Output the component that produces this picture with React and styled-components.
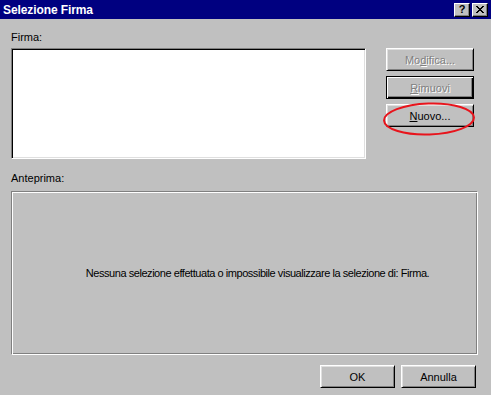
import React from "react";
import styled, { createGlobalStyle } from "styled-components";

const GlobalStyle = createGlobalStyle`
  html, body {
    margin: 0;
    padding: 0;
    background: #c0c0c0;
  }
  body {
    font-family: "Liberation Sans", Arial, sans-serif;
    font-size: 11px;
    color: #000;
  }
`;

const App = () => {
    return (
        <>
            <GlobalStyle />
            <Dialog>
                <TitleBar>
                    <Title>Selezione Firma</Title>
                    <TitleButtons>
                        <CaptionButton>?</CaptionButton>
                        <CaptionButton $gap>
                            <svg width="8" height="7" viewBox="0 0 8 7">
                                <path d="M0 0h2v1h1v1h2V1h1V0h2v1H7v1H6v1H5v1h1v1h1v1h1v1H6V6H5V5H3v1H2v1H0V6h1V5h1V4h1V3H2V2H1V1H0z" fill="#000" />
                            </svg>
                        </CaptionButton>
                    </TitleButtons>
                </TitleBar>

                <Body>
                    <Top>
                        <ListCol>
                            <Label>Firma:</Label>
                            <ListBox />
                        </ListCol>
                        <SideButtons>
                            <Button disabled $wide>Mo<u>d</u>ifica...</Button>
                            <Button disabled $wide $default><u>R</u>imuovi</Button>
                            <Marked>
                                <Button $wide><u>N</u>uovo...</Button>
                                <Circle width="96" height="40" viewBox="0 0 96 40">
                                    <ellipse cx="47" cy="19" rx="45" ry="15.5" transform="rotate(-2 47 19)" fill="none" stroke="#e8141c" strokeWidth="2" />
                                </Circle>
                            </Marked>
                        </SideButtons>
                    </Top>

                    <Label>Anteprima:</Label>
                    <Preview>
                        <PreviewText>Nessuna selezione effettuata o impossibile visualizzare la selezione di: Firma.</PreviewText>
                    </Preview>

                    <Footer>
                        <Button>OK</Button>
                        <Button>Annulla</Button>
                    </Footer>
                </Body>
            </Dialog>
        </>
    )
};

export default App;

const Dialog = styled.div`
  width: 491px;
  height: 395px;
  background: #c0c0c0;
  display: flex;
  flex-direction: column;
`;

const TitleBar = styled.div`
  height: 19px;
  background: #000080;
  display: flex;
  align-items: center;
  justify-content: space-between;
  padding: 0 3px 0 3px;
`;

const Title = styled.div`
  color: #fff;
  font-weight: bold;
  font-size: 12px;
  letter-spacing: -0.1px;
`;

const TitleButtons = styled.div`
  display: flex;
  align-items: center;
`;

const CaptionButton = styled.div`
  width: 16px;
  height: 14px;
  box-sizing: border-box;
  margin-left: ${p => (p.$gap ? "2px" : "0")};
  background: #c0c0c0;
  border: 1px solid;
  border-color: #fff #000 #000 #fff;
  box-shadow: inset -1px -1px #808080;
  display: flex;
  align-items: center;
  justify-content: center;
  font-weight: bold;
  font-size: 11px;
  line-height: 1;
`;

const Body = styled.div`
  flex: 1;
  display: flex;
  flex-direction: column;
  padding: 12px 14px 0 11px;
`;

const Top = styled.div`
  display: flex;
  gap: 20px;
`;

const ListCol = styled.div`
  display: flex;
  flex-direction: column;
`;

const Label = styled.div`
  line-height: 13px;
  height: 13px;
  margin-bottom: 4px;
`;

const ListBox = styled.div`
  width: 355px;
  height: 111px;
  box-sizing: border-box;
  background: #fff;
  border: 1px solid;
  border-color: #808080 #fff #fff #808080;
  box-shadow: inset 1px 1px #000, inset -1px -1px #dfdfdf;
  margin-bottom: 13px;
`;

const SideButtons = styled.div`
  display: flex;
  flex-direction: column;
  gap: 5px;
  padding-top: 17px;
`;

const Button = styled.button`
  width: ${p => (p.$wide ? "88px" : "75px")};
  height: 23px;
  box-sizing: border-box;
  padding: 0;
  background: #c0c0c0;
  font-family: "Liberation Sans", Arial, sans-serif;
  font-size: 11px;
  color: #000;
  border: 1px solid;
  border-color: ${p => (p.$default ? "#000" : "#fff #000 #000 #fff")};
  box-shadow: ${p => (p.$default
        ? "inset 1px 1px #fff, inset -1px -1px #000, inset -2px -2px #808080"
        : "inset 1px 1px #dfdfdf, inset -1px -1px #808080")};

  &:disabled {
    color: #808080;
    text-shadow: 1px 1px #fff;
  }
`;

const Marked = styled.div`
  position: relative;
`;

const Circle = styled.svg`
  position: absolute;
  left: -4px;
  top: -4px;
  pointer-events: none;
`;

const Preview = styled.div`
  width: 467px;
  height: 164px;
  box-sizing: border-box;
  margin-top: 2px;
  padding-left: 26px;
  border: 1px solid;
  border-color: #808080 #fff #fff #808080;
  box-shadow: inset 1px 1px #fff, inset -1px -1px #808080;
  display: flex;
  align-items: center;
  justify-content: center;
`;

const PreviewText = styled.div`
  font-size: 11px;
  letter-spacing: -0.45px;
`;

const Footer = styled.div`
  display: flex;
  justify-content: flex-end;
  gap: 6px;
  padding-top: 10px;
  padding-right: 1px;
`;
